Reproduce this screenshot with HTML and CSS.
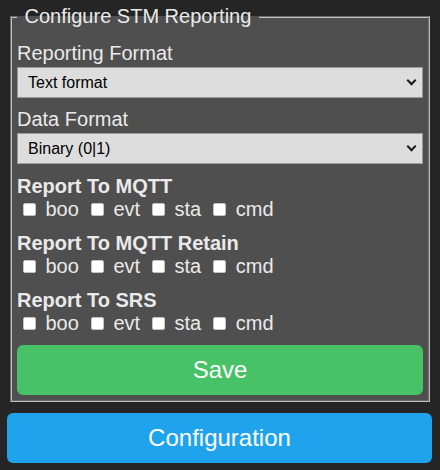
FILE: index.html
```html
<!DOCTYPE html>
<html lang="en">
<head>
<meta charset="utf-8">
<title>Configure STM Reporting</title>
<link rel="stylesheet" href="styles.css">
</head>
<body>
<div class="page">
  <form class="form">
    <fieldset class="panel">
      <legend class="panel-title">&nbsp;Configure STM Reporting&nbsp;</legend>

      <div class="field">
        <label class="field-label" for="rf">Reporting Format</label>
        <div class="select-wrap">
          <select id="rf" class="select"><option>Text format</option><option>JSON format</option></select>
        </div>
      </div>

      <div class="field">
        <label class="field-label" for="df">Data Format</label>
        <div class="select-wrap">
          <select id="df" class="select"><option>Binary (0|1)</option><option>Text (OFF|ON)</option></select>
        </div>
      </div>

      <div class="group">
        <div class="group-title">Report To MQTT</div>
        <div class="checks">
          <label class="check"><input type="checkbox" class="check-box"><span>boo</span></label>
          <label class="check"><input type="checkbox" class="check-box"><span>evt</span></label>
          <label class="check"><input type="checkbox" class="check-box"><span>sta</span></label>
          <label class="check"><input type="checkbox" class="check-box"><span>cmd</span></label>
        </div>
      </div>

      <div class="group">
        <div class="group-title">Report To MQTT Retain</div>
        <div class="checks">
          <label class="check"><input type="checkbox" class="check-box"><span>boo</span></label>
          <label class="check"><input type="checkbox" class="check-box"><span>evt</span></label>
          <label class="check"><input type="checkbox" class="check-box"><span>sta</span></label>
          <label class="check"><input type="checkbox" class="check-box"><span>cmd</span></label>
        </div>
      </div>

      <div class="group">
        <div class="group-title">Report To SRS</div>
        <div class="checks">
          <label class="check"><input type="checkbox" class="check-box"><span>boo</span></label>
          <label class="check"><input type="checkbox" class="check-box"><span>evt</span></label>
          <label class="check"><input type="checkbox" class="check-box"><span>sta</span></label>
          <label class="check"><input type="checkbox" class="check-box"><span>cmd</span></label>
        </div>
      </div>

      <button type="button" class="btn btn-save">Save</button>
    </fieldset>
  </form>
  <button type="button" class="btn btn-config">Configuration</button>
</div>
</body>
</html>
```
FILE: styles.css
```css
html, body {
  margin: 0;
  background: #252525;
}

body {
  padding: 5px 8px 0 7px;
  font-family: "Liberation Sans", Arial, sans-serif;
  font-size: 20px;
  color: #eaeaea;
}

.form {
  margin: 0;
}

.panel {
  margin: 0 2px 0 3px;
  padding: 14px 5px 5px;
  background: #4f4f4f;
  border: 2px groove #c0c0c0;
  min-width: 0;
}

.panel-title {
  padding: 0 2px;
  font-size: 20px;
  line-height: 23px;
  font-weight: normal;
}

.field + .field {
  margin-top: 10px;
}

.field-label {
  display: block;
  line-height: 23px;
}

.select-wrap {
  position: relative;
  margin-top: 2px;
}

.select-wrap::after {
  content: "";
  position: absolute;
  top: 10px;
  right: 8px;
  width: 7px;
  height: 7px;
  box-sizing: border-box;
  border-right: 2px solid #1a1a1a;
  border-bottom: 2px solid #1a1a1a;
  transform: rotate(45deg);
  pointer-events: none;
}

.select {
  display: block;
  width: 100%;
  height: 31px;
  box-sizing: border-box;
  margin: 0;
  padding: 0 30px 0 10px;
  -webkit-appearance: none;
  appearance: none;
  background: #dddddd;
  border: 1px solid #9a9a9a;
  border-radius: 0;
  font-family: "Liberation Sans", Arial, sans-serif;
  font-size: 16px;
  color: #000;
}

.group {
  margin-top: 11px;
}

.group-title {
  font-weight: bold;
  line-height: 23px;
}

.checks {
  display: flex;
  align-items: center;
  height: 23px;
  padding-left: 6px;
}

.check {
  display: flex;
  align-items: center;
  margin-right: 12px;
  line-height: 23px;
}

.check-box {
  -webkit-appearance: none;
  appearance: none;
  width: 13px;
  height: 13px;
  box-sizing: border-box;
  margin: 0 9.5px 0 0;
  background: #fff;
  border: 1px solid #c4c4c4;
  border-radius: 2px;
}

.btn {
  display: block;
  width: 100%;
  height: 50px;
  border: 0;
  border-radius: 6px;
  color: #fff;
  font-family: "Liberation Sans", Arial, sans-serif;
  font-size: 24px;
  padding: 0;
}

.btn-save {
  margin-top: 10px;
  background: #47c266;
}

.btn-config {
  margin-top: 11px;
  background: #1fa3ec;
}
```
